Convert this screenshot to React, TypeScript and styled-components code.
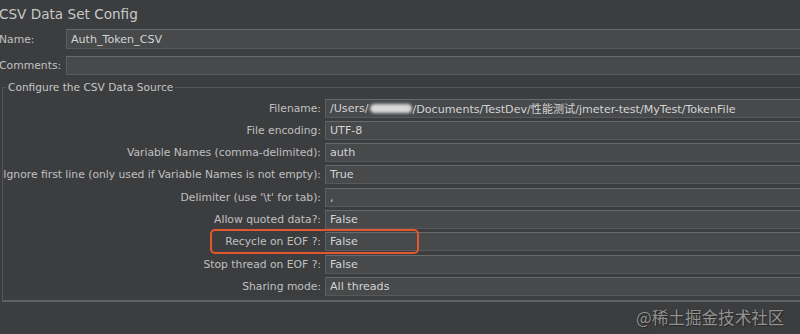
import React from "react";
import styled, { createGlobalStyle } from "styled-components";

const Global = createGlobalStyle`
  html, body { margin: 0; padding: 0; background: #3c3d3f; overflow: hidden; }
  body { font-family: "DejaVu Sans", "Noto Sans CJK SC", sans-serif; }
`;

const Page = styled.div`
  position: relative;
  width: 800px;
  height: 334px;
  background: #3c3d3f;
  color: #bdbdbd;
  overflow: hidden;
`;

const Title = styled.div`
  height: 27px;
  line-height: 28px;
  margin-left: -1px;
  font-size: 13.6px;
  color: #c9c9c9;
  white-space: nowrap;
`;

const TopRow = styled.div<{ $top: number; $h: number }>`
  display: grid;
  grid-template-columns: 66px 1fr;
  align-items: center;
  margin-top: ${(p) => p.$top}px;
  height: ${(p) => p.$h}px;
`;

const TopLabel = styled.span`
  font-size: 10.8px;
  white-space: nowrap;
  margin-left: -1px;
  color: #c2c2c2;
`;

const Field = styled.div<{ $h?: number }>`
  box-sizing: border-box;
  height: ${(p) => p.$h ?? 20}px;
  background: #47494b;
  border-top: 1px solid #696a6c;
  border-bottom: 1px solid #58595b;
  border-left: 1px solid #5e5f61;
  display: flex;
  align-items: center;
  padding-left: 4px;
  font-size: 11.1px;
  color: #d4d4d4;
  white-space: nowrap;
  overflow: hidden;
`;

const Group = styled.div`
  margin-top: 12px;
  margin-left: 2px;
  border-top: 1px solid #545658;
  border-left: 1px solid #545658;
  border-bottom: 2px solid #606264;
  padding-bottom: 4px;
`;

const Legend = styled.div`
  width: fit-content;
  margin-top: -8px;
  margin-left: 3px;
  padding: 0 2px;
  height: 15px;
  line-height: 15px;
  background: #3c3d3f;
  font-size: 10.6px;
  color: #c6c6c6;
  white-space: nowrap;
`;

const Rows = styled.div`
  margin-top: 3.5px;
  display: grid;
  grid-template-columns: 318px 1fr;
  grid-auto-rows: 19px;
  column-gap: 4px;
  row-gap: 3.3px;
  align-items: center;
`;

const Label = styled.span`
  text-align: right;
  font-size: 10.75px;
  white-space: nowrap;
  color: #c0c0c0;
`;

const Blur = styled.span`
  display: inline-block;
  width: 42px;
  height: 9px;
  margin: 0 1px;
  border-radius: 5px;
  background: #d9d9d9;
  filter: blur(1.6px);
`;

const Highlight = styled.div`
  position: absolute;
  left: 210px;
  top: 229px;
  width: 209px;
  height: 25px;
  box-sizing: border-box;
  border: 2px solid #e2572c;
  border-radius: 5px;
  pointer-events: none;
`;

const Watermark = styled.div`
  position: absolute;
  left: 636px;
  top: 306px;
  font-family: "Noto Sans CJK SC", "DejaVu Sans", sans-serif;
  font-size: 16.6px;
  line-height: 23px;
  color: #939393;
  text-shadow: 0 0 1px #222, 1px 1px 1px #2a2a2a;
  white-space: nowrap;
`;

const rows: { label: string; value: React.ReactNode }[] = [
  {
    label: "Filename:",
    value: (
      <>
        /Users/
        <Blur />
        /Documents/TestDev/性能测试/jmeter-test/MyTest/TokenFile
      </>
    ),
  },
  { label: "File encoding:", value: "UTF-8" },
  { label: "Variable Names (comma-delimited):", value: "auth" },
  { label: "Ignore first line (only used if Variable Names is not empty):", value: "True" },
  { label: "Delimiter (use '\\t' for tab):", value: "," },
  { label: "Allow quoted data?:", value: "False" },
  { label: "Recycle on EOF ?:", value: "False" },
  { label: "Stop thread on EOF ?:", value: "False" },
  { label: "Sharing mode:", value: "All threads" },
];

export default function App() {
  return (
    <Page>
      <Global />
      <Title>CSV Data Set Config</Title>
      <TopRow $top={2} $h={20}>
        <TopLabel>Name:</TopLabel>
        <Field $h={20}>Auth_Token_CSV</Field>
      </TopRow>
      <TopRow $top={7} $h={19}>
        <TopLabel>Comments:</TopLabel>
        <Field $h={19} />
      </TopRow>
      <Group>
        <Legend>Configure the CSV Data Source</Legend>
        <Rows>
          {rows.map((r) => (
            <React.Fragment key={r.label}>
              <Label>{r.label}</Label>
              <Field $h={19}>{r.value}</Field>
            </React.Fragment>
          ))}
        </Rows>
      </Group>
      <Highlight />
      <Watermark>@稀土掘金技术社区</Watermark>
    </Page>
  );
}
